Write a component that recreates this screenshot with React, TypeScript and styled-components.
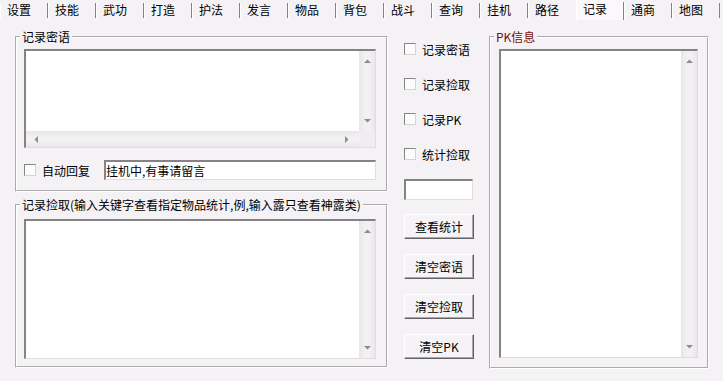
import React from 'react';
import styled, { createGlobalStyle } from 'styled-components';

const GlobalStyle = createGlobalStyle`
  html, body {
    margin: 0;
    padding: 0;
    background: #f5f2f5;
  }
  body {
    font-family: "Noto Sans CJK SC", "Liberation Sans", sans-serif;
    font-size: 12px;
    color: #000;
  }
`;

const Window = styled.div`
  width: 723px;
  height: 381px;
  background: #f5f2f5;
  overflow: hidden;
  display: flex;
  flex-direction: column;
`;

const TabBar = styled.div`
  display: flex;
  height: 20px;
  flex-shrink: 0;
`;

const Tab = styled.div<{ $active?: boolean; $beforeActive?: boolean }>`
  width: 48px;
  height: 20px;
  box-sizing: border-box;
  padding: ${p => (p.$active ? '0 0 2px 7px' : '0 0 0 7px')};
  line-height: ${p => (p.$active ? '18px' : '20px')};
  white-space: nowrap;
  background-color: ${p => (p.$active ? '#faf8fa' : 'transparent')};
  background-image: ${p =>
    p.$beforeActive
      ? 'linear-gradient(#fff, #fff)'
      : 'linear-gradient(#fff, #fff), linear-gradient(#858185, #858185)'};
  background-size: ${p => (p.$active ? '1px 20px, 1px 18px' : '1px 15px, 1px 15px')};
  background-position: ${p => (p.$active ? 'left 0, right 2px' : 'left 3px, right 3px')};
  background-repeat: no-repeat;
`;

const Body = styled.div`
  display: flex;
  align-items: flex-start;
  padding: 10px 0 0 15px;
`;

const LeftColumn = styled.div`
  width: 373px;
  display: flex;
  flex-direction: column;
`;

const Group = styled.fieldset<{ $width: number; $gap?: number }>`
  width: ${p => p.$width}px;
  box-sizing: border-box;
  margin: ${p => p.$gap ?? 0}px 0 0 0;
  padding: 0;
  min-width: 0;
  border: 2px groove #fff;
`;

const Legend = styled.legend<{ $red?: boolean }>`
  margin-left: 3px;
  padding: 0 2px;
  line-height: 14px;
  height: 14px;
  white-space: nowrap;
  color: ${p => (p.$red ? '#7a0a0a' : '#000')};
  background: #f5f2f5;
`;

const GroupInner = styled.div<{ $pad: string }>`
  padding: ${p => p.$pad};
  display: flex;
  flex-direction: column;
`;

const Pane = styled.div<{ $h: number; $hScroll?: boolean }>`
  height: ${p => p.$h}px;
  box-sizing: border-box;
  border-style: solid;
  border-width: 2px 1px 1px 2px;
  border-color: #868286 #e0dce0 #e0dce0 #868286;
  background: #fff;
  display: grid;
  grid-template-columns: 1fr 16px;
  grid-template-rows: ${p => (p.$hScroll ? '1fr 16px' : '1fr')};
`;

const PaneArea = styled.div`
  background: #fff;
`;

const VScroll = styled.div`
  display: flex;
  flex-direction: column;
  justify-content: space-between;
  align-items: center;
  padding: 8px 0 8px;
  background: linear-gradient(to right, #e8e5e8, #f2f0f2 35%, #f2f0f2 65%, #e9e6e9);
`;

const HScroll = styled.div`
  display: flex;
  justify-content: space-between;
  align-items: center;
  padding: 0 10px 0 8px;
  background: linear-gradient(to bottom, #e8e5e8, #f2f0f2 35%, #f2f0f2 65%, #e9e6e9);
`;

const Corner = styled.div`
  background: #f0edf0;
`;

const Arrow: React.FC<{ dir: 'up' | 'down' | 'left' | 'right' }> = ({ dir }) => {
  const vertical = dir === 'up' || dir === 'down';
  const pts = {
    up: '0,4 3.5,0.5 7,4',
    down: '0,0 3.5,3.5 7,0',
    left: '4,0 0.5,3.5 4,7',
    right: '0,0 3.5,3.5 0,7',
  }[dir];
  return (
    <svg width={vertical ? 7 : 4} height={vertical ? 4 : 7} viewBox={vertical ? '0 0 7 4' : '0 0 4 7'}>
      <polygon points={pts} fill="#8e8a8e" />
    </svg>
  );
};

const Row = styled.div`
  display: flex;
  align-items: center;
  height: 20px;
  margin-top: 12px;
`;

const CheckLabel = styled.label<{ $width?: number }>`
  display: flex;
  align-items: center;
  gap: 6px;
  white-space: nowrap;
  width: ${p => (p.$width ? `${p.$width}px` : 'auto')};
  flex-shrink: 0;
`;

const Box = styled.span`
  width: 12px;
  height: 12px;
  box-sizing: border-box;
  border: 1px solid;
  border-color: #878387 #d6d2d6 #d6d2d6 #878387;
  background: #fcfcfc;
  flex-shrink: 0;
`;

const TextField = styled.div<{ $h: number }>`
  flex: 1;
  height: ${p => p.$h}px;
  box-sizing: border-box;
  border-style: solid;
  border-width: 2px 1px 1px 2px;
  border-color: #868286 #e0dce0 #e0dce0 #868286;
  background: #fff;
  line-height: ${p => p.$h - 3}px;
  white-space: nowrap;
  overflow: hidden;
`;

const SideColumn = styled.div`
  width: 70px;
  margin-left: 16px;
  padding-top: 9px;
  display: flex;
  flex-direction: column;
`;

const SideCheck = styled.div`
  height: 20px;
  display: flex;
  align-items: center;
  margin-bottom: 15px;
`;

const SmallInput = styled.div`
  width: 69px;
  height: 21px;
  box-sizing: border-box;
  border-style: solid;
  border-width: 2px 1px 1px 2px;
  border-color: #868286 #e0dce0 #e0dce0 #868286;
  background: #fff;
  margin-bottom: 14px;
`;

const Button = styled.button`
  width: 70px;
  height: 25px;
  box-sizing: border-box;
  margin: 0 0 15px 0;
  padding: 0;
  font: inherit;
  color: #000;
  background: #f5f3f5;
  border: 1px solid;
  border-color: #fff #646064 #646064 #fff;
  box-shadow: inset -1px -1px 0 #a9a5a9;
  white-space: nowrap;
`;

const RightGroupWrap = styled.div`
  margin-left: 15px;
`;

const tabs = ['设置', '技能', '武功', '打造', '护法', '发言', '物品', '背包', '战斗', '查询', '挂机', '路径', '记录', '通商', '地图'];
const activeTab = 12;

const sideChecks = ['记录密语', '记录捡取', '记录PK', '统计捡取'];
const sideButtons = ['查看统计', '清空密语', '清空捡取', '清空PK'];

const App: React.FC = () => {
  return (
    <Window>
      <GlobalStyle />
      <TabBar>
        {tabs.map((t, i) => (
          <Tab key={t} $active={i === activeTab} $beforeActive={i === activeTab - 1}>
            {t}
          </Tab>
        ))}
      </TabBar>

      <Body>
        <LeftColumn>
          <Group $width={373}>
            <Legend>记录密语</Legend>
            <GroupInner $pad="5px 10px 10px 7px">
              <Pane $h={99} $hScroll>
                <PaneArea />
                <VScroll>
                  <Arrow dir="up" />
                  <Arrow dir="down" />
                </VScroll>
                <HScroll>
                  <Arrow dir="left" />
                  <Arrow dir="right" />
                </HScroll>
                <Corner />
              </Pane>
              <Row>
                <CheckLabel $width={80}>
                  <Box />
                  自动回复
                </CheckLabel>
                <TextField $h={20}>挂机中,有事请留言</TextField>
              </Row>
            </GroupInner>
          </Group>

          <Group $width={373} $gap={6}>
            <Legend>记录捡取(输入关键字查看指定物品统计,例,输入露只查看神露类)</Legend>
            <GroupInner $pad="7px 10px 7px 7px">
              <Pane $h={140}>
                <PaneArea />
                <VScroll>
                  <Arrow dir="up" />
                  <Arrow dir="down" />
                </VScroll>
              </Pane>
            </GroupInner>
          </Group>
        </LeftColumn>

        <SideColumn>
          {sideChecks.map(c => (
            <SideCheck key={c}>
              <CheckLabel>
                <Box />
                {c}
              </CheckLabel>
            </SideCheck>
          ))}
          <SmallInput />
          {sideButtons.map(b => (
            <Button key={b}>{b}</Button>
          ))}
        </SideColumn>

        <RightGroupWrap>
          <Group $width={220}>
            <Legend $red>PK信息</Legend>
            <GroupInner $pad="5px 9px 9px 8px">
              <Pane $h={309}>
                <PaneArea />
                <VScroll>
                  <Arrow dir="up" />
                  <Arrow dir="down" />
                </VScroll>
              </Pane>
            </GroupInner>
          </Group>
        </RightGroupWrap>
      </Body>
    </Window>
  );
};

export default App;
